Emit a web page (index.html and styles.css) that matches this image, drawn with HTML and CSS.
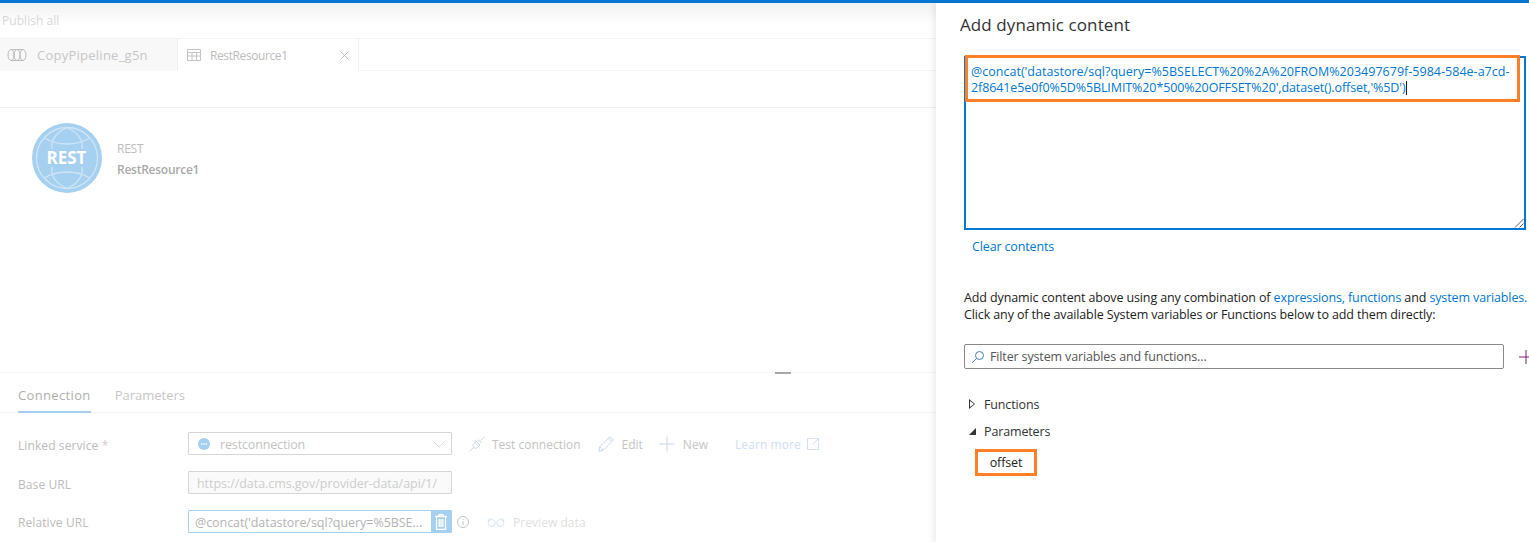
FILE: index.html
```html
<!DOCTYPE html>
<html lang="en">
<head>
<meta charset="utf-8">
<title>Add dynamic content</title>
<link rel="stylesheet" href="styles.css">
</head>
<body>
<div class="topbar"></div>
<div class="app">
  <main class="left">
    <div class="publish"><span>Publish all</span></div>
    <div class="tabs">
      <div class="tab tab-off">
        <svg class="tab-icon" width="20" height="14" viewBox="0 0 20 14" fill="none" stroke="#bdbdbd"><path d="M4 1.5h12M4 12.5h12"/><ellipse cx="4" cy="7" rx="3" ry="5.5"/><ellipse cx="10" cy="7" rx="3" ry="5.5"/><ellipse cx="16" cy="7" rx="3" ry="5.5"/></svg>
        <span>CopyPipeline_g5n</span>
      </div>
      <div class="tab tab-on">
        <svg class="tab-icon" width="14" height="12" viewBox="0 0 14 12" fill="none" stroke="#c4c4c4"><path d="M.5.5h13v11H.5zM.5 3.5h13M.5 7h13M5 3.5v8M9.500 3.500v8"/></svg>
        <span class="tab-name">RestResource1</span>
        <svg class="tab-x" width="9" height="9" viewBox="0 0 9 9" stroke="#c0c0c0"><path d="M.5.5l8 8M8.500.5l-8 8"/></svg>
      </div>
    </div>
    <div class="subbar"></div>
    <section class="canvas">
      <svg class="rest" width="70" height="70" viewBox="0 0 70 70">
        <circle cx="35" cy="35" r="35" fill="#a6d0f0"/>
        <g fill="none" stroke="#cfe5f7" stroke-width="1.300">
          <circle cx="35" cy="35" r="30.500"/>
          <path d="M12 15c14 8 32 8 46 0M12 55c14-8 32-8 46 0M35 4.500C19 12 19 22 20 26M35 4.500C51 12 51 22 50 26M35 65.500C19 58 19 48 20 44M35 65.500C51 58 51 48 50 44"/>
        </g>
        <text x="34.500" y="41" text-anchor="middle" class="rest-text">REST</text>
      </svg>
      <div class="rest-label">
        <div class="rest-type">REST</div>
        <div class="rest-name">RestResource1</div>
      </div>
    </section>
    <section class="props">
      <div class="grip"></div>
      <div class="prop-tabs">
        <div class="prop-tab prop-tab-on">Connection</div>
        <div class="prop-tab">Parameters</div>
      </div>
      <div class="form">
        <div class="row">
          <label class="lbl">Linked service <i>*</i></label>
          <div class="field select">
            <svg class="ls-icon" width="12" height="12" viewBox="0 0 12 12"><circle cx="6" cy="6" r="6" fill="#a6d0f0"/><path d="M3 6h6" stroke="#fff" stroke-width="1.500" stroke-dasharray="1 .7"/></svg>
            <span class="txt txt-conn">restconnection</span>
            <svg class="chev" width="14" height="8" viewBox="0 0 14 8" fill="none" stroke="#dcdcdc"><path d="M1 1l6 6 6-6"/></svg>
          </div>
          <div class="actions">
            <span class="act act-test">
              <svg width="16" height="16" viewBox="0 0 16 16" fill="none" stroke="#c8d6ee"><path d="M.5 15.500l4.500-4.500M15.500.5l-4 4M6 6.500l3.500 3.500M5 7.500c-2 2-1 4 .5 4.500s2.500 0 3-.5l2.500-2.500-4.500-4.500zM9 3.500l3.500 3.500"/></svg>
              <span class="act-label">Test connection</span>
            </span>
            <span class="act act-edit">
              <svg width="16" height="16" viewBox="0 0 16 16" fill="none" stroke="#c8d6ee"><path d="M.8 15.200l1-4.500L12 .8l3.200 3.200L5.300 14.200zM1.800 10.700l3.500 3.500M10.500 2.300l3.200 3.200"/></svg>
              <span class="act-label">Edit</span>
            </span>
            <span class="act act-new">
              <svg width="16" height="16" viewBox="0 0 16 16" stroke="#c8d6ee"><path d="M8 .5v15M.5 8h15"/></svg>
              <span class="act-label">New</span>
            </span>
            <span class="learn"><span class="learn-label">Learn more</span>
              <svg width="12" height="12" viewBox="0 0 12 12" fill="none" stroke="#cfe0f7"><path d="M7 .5H.5v11h11V5M6 6l5.500-5.500M8 .5h3.500V4"/></svg>
            </span>
          </div>
        </div>
        <div class="row">
          <label class="lbl">Base URL</label>
          <div class="field readonly"><span class="txt">https://data.cms.gov/provider-data/api/1/</span></div>
        </div>
        <div class="row">
          <label class="lbl lbl-rel">Relative URL</label>
          <div class="field dynamic">
            <span class="txt dyn-text">@concat('datastore/sql?query=%5BSE...</span>
            <span class="trash">
              <svg width="12" height="16" viewBox="0 0 12 16" fill="none" stroke="#fff" stroke-width="1.300"><path d="M0 2.500h12M4 2.500V.7h4v1.800M1.500 2.500v13h9v-13M4.200 5v8M6 5v8M7.800 5v8"/></svg>
            </span>
          </div>
          <svg class="info" width="12" height="12" viewBox="0 0 12 12" fill="none" stroke="#c4c4c4"><circle cx="6" cy="6" r="5.500"/><path d="M6 5v4M6 3v1"/></svg>
          <span class="preview">
            <svg width="18" height="10" viewBox="0 0 18 10" fill="none" stroke="#d5e7f6"><circle cx="4.500" cy="6" r="3.500"/><circle cx="13.500" cy="6" r="3.500"/><path d="M8 6h2M1 5l2-4M17 5l-2-4"/></svg>
            <span class="act-label">Preview data</span>
          </span>
        </div>
      </div>
    </section>
  </main>
  <aside class="panel">
    <h1 class="title">Add dynamic content</h1>
    <div class="editor">
      <div class="code"><span class="code-a">@concat('datastore/sql?query=%5BSELECT%20%2A%20FROM%203497679f-5984-584e-a7cd-</span><br><span class="code-b">2f8641e5e0f0%5D%5BLIMIT%20*500%20OFFSET%20',dataset().offset,'%5D')</span><span class="caret"></span></div>
      <div class="callout callout-code"></div>
      <svg class="resize" width="10" height="10" viewBox="0 0 10 10" stroke="#666"><path d="M9.500 1l-8.500 8.500M9.500 5.500l-4 4"/></svg>
    </div>
    <a class="clear">Clear contents</a>
    <p class="help">Add dynamic content above using any combination of <a>expressions, functions</a> and <a>system variables.</a><br>Click any of the available System variables or Functions below to add them directly:</p>
    <div class="filter-row">
      <div class="filter">
        <svg width="14" height="14" viewBox="0 0 14 14" fill="none" stroke="#4a7fb5"><circle cx="8.500" cy="5.500" r="4"/><path d="M5.500 8.500L1 13"/></svg>
        <span>Filter system variables and functions...</span>
      </div>
      <svg class="plus" width="14" height="14" viewBox="0 0 14 14" stroke="#7a1f7a"><path d="M7 0v14M0 7h14"/></svg>
    </div>
    <div class="tree tree-fn"><span class="arrow-open"></span>Functions</div>
    <div class="tree tree-par"><span class="arrow-down"></span>Parameters</div>
    <div class="offset-row"><div class="offset">offset</div></div>
  </aside>
</div>
</body>
</html>
```
FILE: styles.css
```css
* { box-sizing: border-box; }
html, body { margin: 0; height: 100%; }
body {
  width: 1529px; height: 543px; overflow: hidden; background: #fff;
  font-family: "Open Sans", "Noto Sans", sans-serif; font-size: 12.5px; letter-spacing: -.14px;
  display: flex; flex-direction: column;
}
.topbar { height: 3px; background: #0078d4; flex: none; }
.app { flex: 1; display: flex; min-height: 0; }

.left { width: 936px; flex: none; display: flex; flex-direction: column; color: #bdbdbd; }
.publish {
  height: 35px; padding: 10px 0 0 2px; line-height: 16px; color: #d8d8d8; font-size: 12px; letter-spacing: .05px;
  background: linear-gradient(#f1f1f1, #fff 60%); flex: none;
}
.tabs { height: 33px; display: flex; flex: none; border-top: 1px solid #f3f3f3; border-bottom: 1px solid #f3f3f3; }
.tab { display: flex; align-items: center; height: 32px; }
.tab-off { width: 177px; background: #f8f8f8; padding-left: 7px; gap: 10px; font-size: 13px; letter-spacing: .25px; color: #c6c6c6; }
.tab-on { width: 182px; padding-left: 9px; border-right: 1px solid #eee; margin-bottom: -1px; background: #fff; border-left: 1px solid #f0f0f0; font-size: 12px; letter-spacing: -.4px; }
.tab-on .tab-icon { margin-right: 9px; }
.tab-name { flex: 1; }
.tab-x { margin-right: 9px; }
.subbar { height: 37px; border-bottom: 1px solid #f0f0f0; flex: none; }
.canvas { height: 265px; flex: none; display: flex; align-items: flex-start; padding: 15px 0 0 32px; border-bottom: 1px solid #f7f7f7; font-size: 12px; letter-spacing: -.25px; }
.rest-text { font: 700 17px "Open Sans", sans-serif; fill: #fff; letter-spacing: 0; }
.rest-label { margin-left: 15px; padding-top: 18px; }
.rest-type { line-height: 16px; }
.rest-name { line-height: 16px; margin-top: 5px; font-weight: 600; color: #aaa; }

.props { flex: 1; position: relative; }
.grip { position: absolute; left: 775px; top: -1px; width: 16px; height: 2px; background: #a8a8a8; }
.prop-tabs { display: flex; height: 40px; border-bottom: 1px solid #f3f3f3; padding-left: 18px; gap: 24px; font-size: 13px; letter-spacing: 0; }
.prop-tab { padding-top: 13px; height: 40px; color: #c8c8c8; }
.prop-tab-on { color: #b0b0b0; border-bottom: 2px solid #a6d0f0; letter-spacing: .35px; }
.form { padding: 19px 0 0 18px; display: flex; flex-direction: column; gap: 16px; }
.row { display: flex; align-items: center; height: 23px; }
.lbl { width: 170px; flex: none; color: #bcbcbc; font-weight: 500; font-size: 12px; letter-spacing: .1px; padding-top: 3px; }
.lbl-rel { padding-top: 1px; }
.lbl i { font-style: normal; color: #e0c8c8; }
.field { width: 264px; height: 23px; flex: none; border: 1px solid #d6d6d6; border-radius: 1px; display: flex; align-items: center; padding-left: 8px; color: #c4c4c4; letter-spacing: -.05px; }
.txt { padding-top: 2px; white-space: nowrap; }
.txt-conn { letter-spacing: -.15px; }
.select { padding-left: 9px; position: relative; }
.ls-icon { margin-right: 10px; }
.chev { position: absolute; right: 5px; top: 7px; }
.readonly { background: #fafafa; color: #cdcdcd; overflow: hidden; }
.dynamic { border-color: #a6d0f0; color: #b4b4b4; padding-right: 0; justify-content: space-between; padding-left: 6px; }
.dyn-text { overflow: hidden; }
.trash { width: 20px; height: 21px; background: #a6d0f0; display: flex; align-items: center; justify-content: center; }
.actions { display: flex; align-items: center; margin-left: 17px; color: #c4c4c4; font-size: 12px; letter-spacing: 0; }
.act { display: flex; align-items: center; gap: 7px; }
.act-label { padding-top: 1px; }
.act-edit { margin-left: 17px; gap: 8px; }
.act-new { margin-left: 16px; gap: 8px; }
.learn { margin-left: 27px; color: #cfe0f7; display: flex; align-items: center; gap: 6px; letter-spacing: .1px; }
.learn-label { padding-top: 2px; }
.info { margin-left: 5px; }
.preview { margin-left: 18px; color: #e0e0e0; display: flex; align-items: center; gap: 8px; font-size: 12px; letter-spacing: .05px; }

.panel { flex: 1; min-width: 0; box-shadow: -3px 0 6px rgba(0,0,0,.07); padding: 0 0 0 28px; color: #222; background: #fff; z-index: 1; overflow: hidden; }
.title { font-size: 17px; font-weight: 500; margin: 0 0 0 -4px; height: 53px; line-height: 44px; color: #333; letter-spacing: .1px; }
.editor { position: relative; width: 562px; height: 174px; border: 2px solid #0078d4; padding: 5px; }
.code { color: #0078d4; line-height: 16px; white-space: nowrap; margin-top: 1px; }
.code-a { letter-spacing: .02px; }
.code-b { letter-spacing: -.1px; }
.caret { display: inline-block; width: 1px; height: 14px; background: #222; vertical-align: -3px; }
.callout { position: absolute; border: 3px solid #ff7f27; }
.callout-code { left: -1px; top: -3px; width: 555px; height: 47px; }
.resize { position: absolute; right: 0; bottom: 0; }
.clear { display: block; margin: 9px 0 0 8px; line-height: 16px; color: #0078d4; }
.help { margin: 34px 0 0; line-height: 17px; white-space: nowrap; letter-spacing: -.12px; }
.help a { color: #0078d4; }
.filter-row { display: flex; align-items: center; margin-top: 21px; }
.filter { width: 540px; height: 25px; border: 1px solid #8a8a8a; border-radius: 2px; display: flex; align-items: center; padding-left: 6px; gap: 5px; color: #555; flex: none; }
.plus { margin-left: 15px; flex: none; }
.tree { display: flex; align-items: center; font-weight: 500; color: #333; height: 16px; }
.tree-fn { margin-top: 27px; }
.tree-par { margin-top: 11px; }
.arrow-open { width: 0; height: 0; border-left: 6px solid #333; border-top: 5px solid transparent; border-bottom: 5px solid transparent; margin: 0 9px 0 5px; position: relative; }
.arrow-open::after { content: ""; position: absolute; left: -5px; top: -3px; border-left: 4px solid #fff; border-top: 3px solid transparent; border-bottom: 3px solid transparent; }
.arrow-down { width: 0; height: 0; border-right: 7px solid #333; border-top: 7px solid transparent; margin: 0 8px 0 5px; }
.offset-row { padding: 10px 0 0 11px; }
.offset { width: 62px; height: 27px; border: 3px solid #ff7f27; display: flex; align-items: center; justify-content: center; color: #222; }
```
